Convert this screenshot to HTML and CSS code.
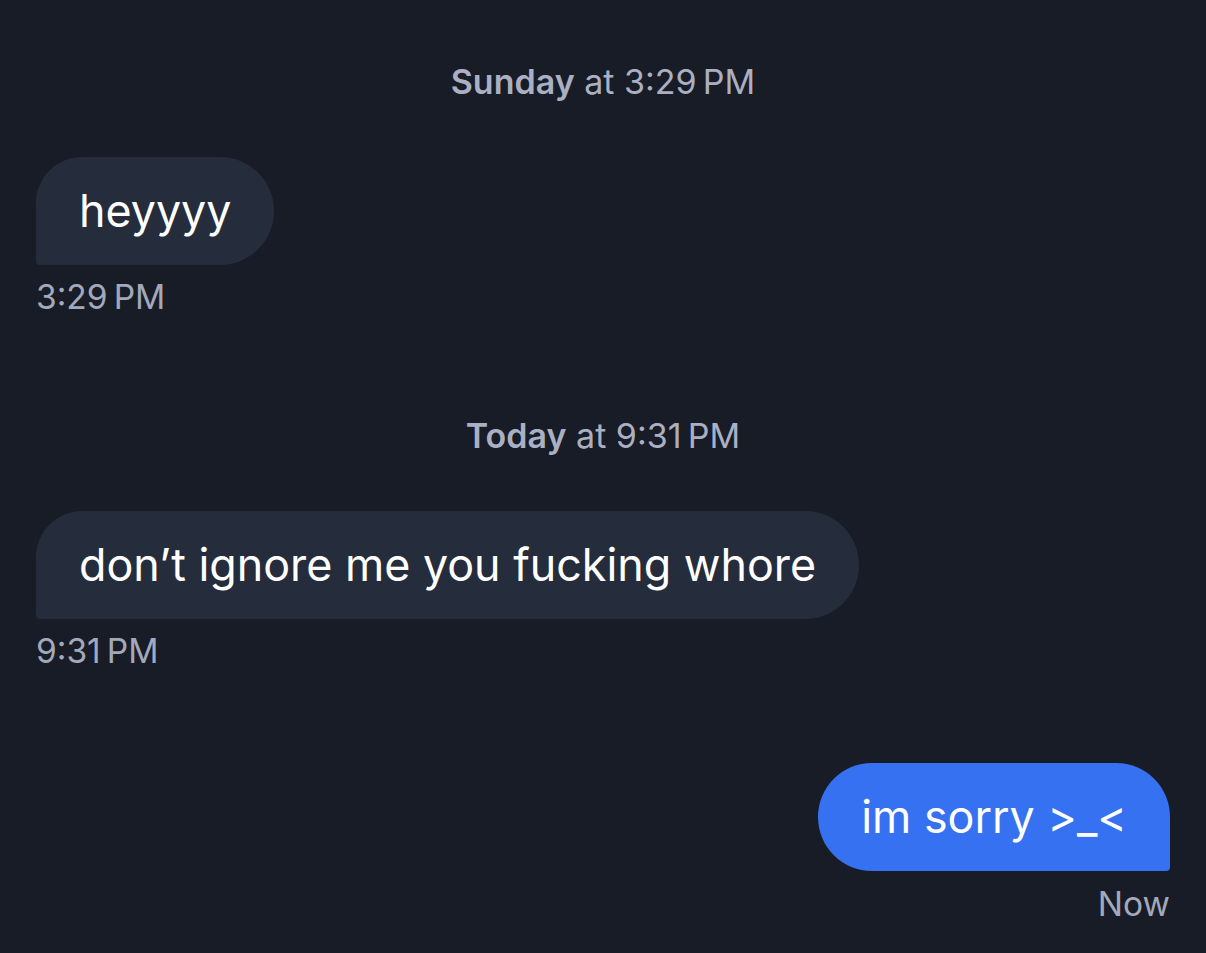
FILE: index.html
```html
<!DOCTYPE html>
<html lang="en">
<head>
<meta charset="utf-8">
<title>Chat</title>
<link rel="stylesheet" href="styles.css">
</head>
<body>
<main class="chat">
  <div class="day"><b>Sunday</b> at 3:29&#8201;PM</div>
  <div class="msg in">
    <div class="bubble">heyyyy</div>
    <div class="time">3:29&#8201;PM</div>
  </div>

  <div class="day day-later"><b>Today</b> at 9:31&#8201;PM</div>
  <div class="msg in">
    <div class="bubble">don’t ignore me you fucking whore</div>
    <div class="time">9:31&#8201;PM</div>
  </div>

  <div class="msg out">
    <div class="bubble">im sorry &gt;_&lt;</div>
    <div class="time">Now</div>
  </div>
</main>
</body>
</html>
```

FILE: styles.css
```css
html, body {
  margin: 0;
  padding: 0;
  background: #181c26;
}

body {
  font-family: Inter, "Noto Sans", sans-serif;
  height: 953px;
  overflow: hidden;
}

.chat {
  display: flex;
  flex-direction: column;
  padding: 62px 36px 0;
}

.day {
  text-align: center;
  font-size: 34px;
  line-height: 40px;
  color: #aab0c2;
}

.day b {
  font-weight: 600;
}

.day-later {
  margin-top: 99px;
}

.msg {
  display: flex;
  flex-direction: column;
  margin-top: 55px;
}

.msg.in {
  align-items: flex-start;
}

.msg.out {
  align-items: flex-end;
  margin-top: 92px;
}

.bubble {
  font-size: 44.8px;
  line-height: 54px;
  padding: 27px 43px;
  color: #ffffff;
  white-space: nowrap;
}

.in .bubble {
  background: #252d3c;
  border-radius: 46px 54px 54px 4px;
}

.out .bubble {
  background: #3671f1;
  border-radius: 54px 54px 4px 54px;
}

.time {
  margin-top: 12px;
  font-size: 33.5px;
  line-height: 40px;
  color: #a2a9bb;
}

.out .time {
  margin-top: 13px;
}
```
